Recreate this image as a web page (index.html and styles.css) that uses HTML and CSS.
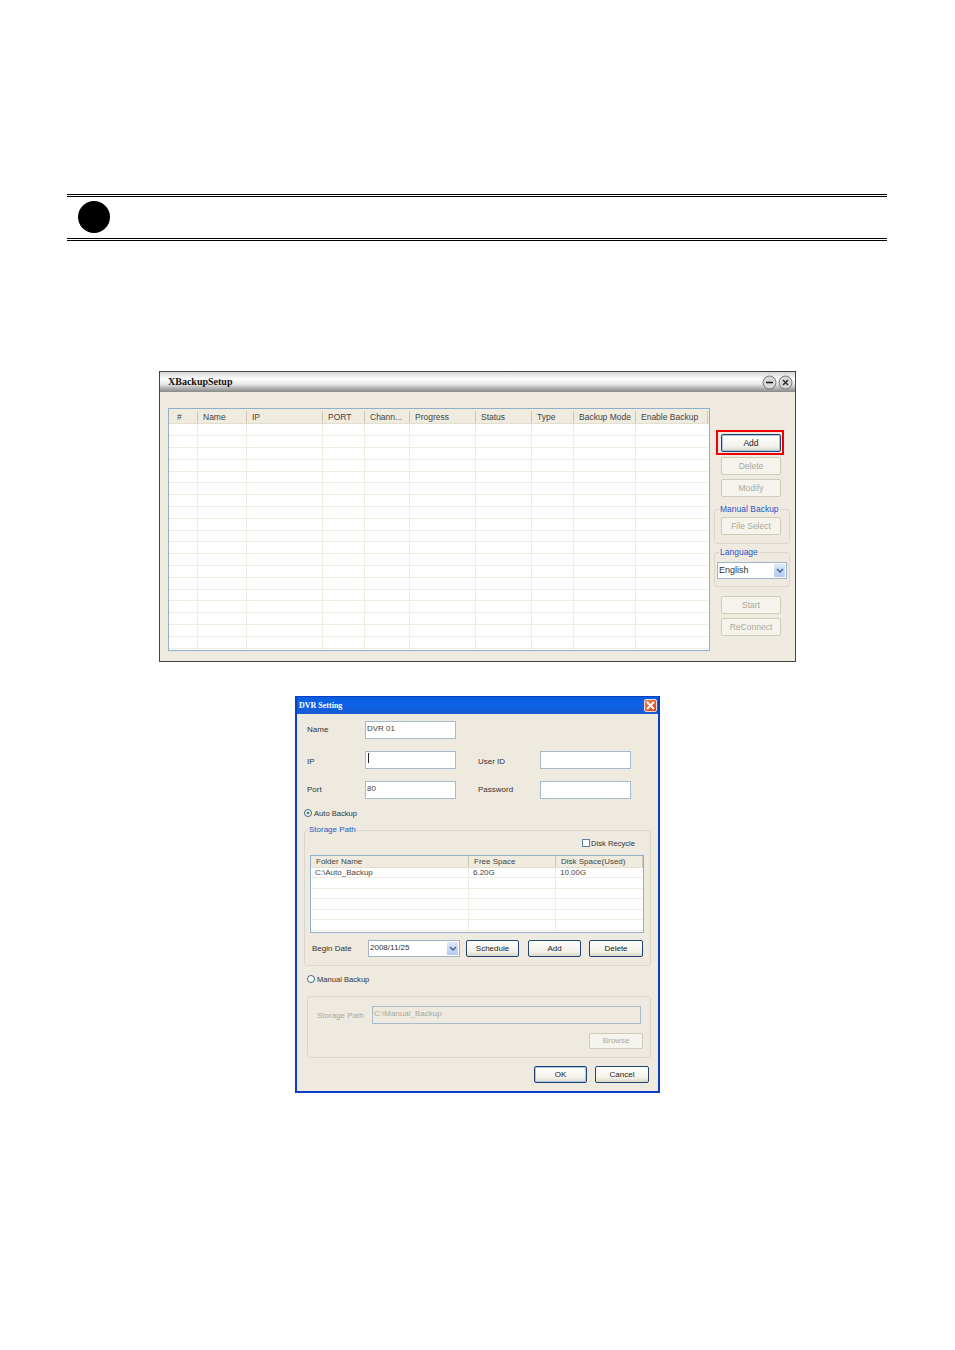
FILE: index.html
```html
<!DOCTYPE html>
<html lang="en">
<head>
    <meta charset="UTF-8">
    <title>XBackup Setup</title>
    <link rel="stylesheet" href="styles.css">
</head>
<body>
    <div class="note-bar">
        <div class="note-dot"></div>
    </div>

    <!-- XBackup main window -->
    <div class="xb-window">
        <div class="xb-title">
            <span class="xb-title-text">XBackupSetup</span>
            <div class="xb-title-icons">
                <svg width="15" height="15" viewBox="0 0 15 15"><circle cx="7.5" cy="7.5" r="6.5" fill="#d8d8d8" stroke="#777"/><path d="M4 7.5h7" stroke="#222" stroke-width="1.6"/></svg>
                <svg width="15" height="15" viewBox="0 0 15 15"><circle cx="7.5" cy="7.5" r="6.5" fill="#d8d8d8" stroke="#777"/><path d="M5 5l5 5M10 5l-5 5" stroke="#333" stroke-width="1.6"/></svg>
            </div>
        </div>
        <div class="xb-body">
            <div class="list xb-list">
                <div class="list-head">
                    <div class="col c1 hash">#</div>
                    <div class="col c2">Name</div>
                    <div class="col c3">IP</div>
                    <div class="col c4">PORT</div>
                    <div class="col c5">Chann...</div>
                    <div class="col c6">Progress</div>
                    <div class="col c7">Status</div>
                    <div class="col c8">Type</div>
                    <div class="col c9">Backup Mode</div>
                    <div class="col c10">Enable Backup</div>
                </div>
                <div class="list-rows">
                    <div class="cell c1"></div>
                    <div class="cell c2"></div>
                    <div class="cell c3"></div>
                    <div class="cell c4"></div>
                    <div class="cell c5"></div>
                    <div class="cell c6"></div>
                    <div class="cell c7"></div>
                    <div class="cell c8"></div>
                    <div class="cell c9"></div>
                    <div class="cell c10"></div>
                </div>
            </div>
            <div class="xb-side">
                <div class="add-wrap">
                    <div class="btn btn-focus">Add</div>
                    <div class="red-box"></div>
                </div>
                <div class="btn disabled">Delete</div>
                <div class="btn disabled">Modify</div>
                <fieldset class="group side-group manual-group">
                    <legend>Manual Backup</legend>
                    <div class="btn disabled">File Select</div>
                </fieldset>
                <fieldset class="group side-group lang-group">
                    <legend>Language</legend>
                    <div class="select lang-select">
                        <span class="select-text">English</span>
                        <div class="select-arrow">
                            <svg width="8" height="6" viewBox="0 0 8 6"><path d="M1 1l3 3 3-3" fill="none" stroke="#4d6185" stroke-width="1.5"/></svg>
                        </div>
                    </div>
                </fieldset>
                <div class="btn disabled start-btn">Start</div>
                <div class="btn disabled">ReConnect</div>
            </div>
        </div>
    </div>

    <!-- DVR Setting dialog -->
    <div class="dvr-window">
        <div class="dvr-title">
            <span class="dvr-title-text">DVR Setting</span>
            <div class="dvr-close">
                <svg width="9" height="9" viewBox="0 0 9 9"><path d="M1 1l7 7M8 1l-7 7" stroke="#fff" stroke-width="1.8"/></svg>
            </div>
        </div>
        <div class="dvr-body">
            <div class="form-grid">
                <div class="form-label">Name</div>
                <div class="input">DVR 01</div>
                <div></div>
                <div></div>
                <div class="form-label form-label-low">IP</div>
                <div class="input"><span class="caret"></span></div>
                <div class="form-label form-label-right form-label-low">User ID</div>
                <div class="input"></div>
                <div class="form-label">Port</div>
                <div class="input">80</div>
                <div class="form-label form-label-right">Password</div>
                <div class="input"></div>
            </div>

            <div class="radio-row auto-row">
                <span class="radio checked"></span>
                <span>Auto Backup</span>
            </div>

            <fieldset class="group storage-group">
                <legend>Storage Path</legend>
                <div class="recycle-row">
                    <span class="checkbox"></span>
                    <span>Disk Recycle</span>
                </div>
                <div class="list dvr-list">
                    <div class="list-head">
                        <div class="col d1">Folder Name</div>
                        <div class="col d2">Free Space</div>
                        <div class="col d3">Disk Space(Used)</div>
                    </div>
                    <div class="list-rows">
                        <div class="cell d1">C:\Auto_Backup</div>
                        <div class="cell d2">6.20G</div>
                        <div class="cell d3">10.00G</div>
                    </div>
                </div>
                <div class="date-row">
                    <div class="date-label">Begin Date</div>
                    <div class="select date-select">
                        <span class="select-text">2008/11/25</span>
                        <div class="select-arrow">
                            <svg width="8" height="6" viewBox="0 0 8 6"><path d="M1 1l3 3 3-3" fill="none" stroke="#4d6185" stroke-width="1.5"/></svg>
                        </div>
                    </div>
                    <div class="btn btn-small schedule-small">Schedule</div>
                    <div class="btn btn-small add-small">Add</div>
                    <div class="btn btn-small delete-small">Delete</div>
                </div>
            </fieldset>

            <div class="radio-row manual-row">
                <span class="radio"></span>
                <span>Manual Backup</span>
            </div>

            <div class="group manual-box">
                <div class="manual-path">
                    <div class="manual-label">Storage Path</div>
                    <div class="input manual-input">C:\Manual_Backup</div>
                </div>
                <div class="browse-row">
                    <div class="btn btn-small disabled">Browse</div>
                </div>
            </div>

            <div class="dialog-buttons">
                <div class="btn btn-small btn-focus">OK</div>
                <div class="btn btn-small cancel-btn">Cancel</div>
            </div>
        </div>
    </div>
</body>
</html>
```

FILE: styles.css
```css
* {
    box-sizing: border-box;
    margin: 0;
    padding: 0;
}

body {
    background-color: #fff;
    color: #333;
    font-family: "Liberation Sans", Arial, sans-serif;
    font-size: 8.5px;
    height: 1350px;
    overflow: hidden;
}

/* Note bar */
.note-bar {
    width: 820px;
    height: 47px;
    margin: 194px 0 0 67px;
    border-top: 3px double #000;
    border-bottom: 3px double #000;
    padding: 4px 0 0 11px;
}

.note-dot {
    width: 32px;
    height: 32px;
    border-radius: 50%;
    background-color: #000;
}

/* XBackup window */
.xb-window {
    width: 637px;
    height: 291px;
    margin: 130px 0 0 159px;
    border: 1px solid #444;
    background-color: #eeeae0;
}

.xb-title {
    height: 20px;
    display: flex;
    justify-content: space-between;
    align-items: center;
    padding: 0 2px 2px 8px;
    background: linear-gradient(to bottom, #d5d5d5 0, #fdfdfd 35%, #e8e8e8 60%, #a9a9a9 85%, #8a8a8a 100%);
}

.xb-title-text {
    font-family: "Liberation Serif", serif;
    font-size: 10px;
    font-weight: bold;
    color: #111;
}

.xb-title-icons {
    display: flex;
    gap: 1px;
    margin-bottom: -2px;
}

.xb-body {
    display: flex;
    padding: 16px 0 0 8px;
}

/* List views */
.list {
    border: 1px solid #8fb0c8;
    background-color: #fff;
    display: flex;
    flex-direction: column;
}

.list-head {
    display: flex;
    background-color: #efebdf;
    border-bottom: 1px solid #e2dfd0;
    padding-top: 1px;
}

.col {
    height: 12px;
    line-height: 12px;
    padding-left: 5px;
    border-right: 1px solid #c9c6b6;
    margin-top: 1px;
    white-space: nowrap;
    overflow: hidden;
    color: #444;
}

.hash {
    padding-left: 8px;
}

.list-rows {
    flex: 1;
    display: flex;
}

.cell {
    border-right: 1px solid #efeddf;
    white-space: nowrap;
}

.cell.c10,
.cell.d3 {
    border-right: none;
}

.xb-list {
    width: 542px;
    height: 243px;
}

.xb-list .list-head {
    height: 15px;
}

/* five rows of 12, 12, 12, 12, 11 px */
.xb-list .list-rows {
    background-image: linear-gradient(to bottom,
        transparent 11px, #efeddf 11px, #efeddf 12px,
        transparent 12px, transparent 23px, #efeddf 23px, #efeddf 24px,
        transparent 24px, transparent 35px, #efeddf 35px, #efeddf 36px,
        transparent 36px, transparent 47px, #efeddf 47px, #efeddf 48px,
        transparent 48px, transparent 58px, #efeddf 58px, #efeddf 59px);
    background-size: 100% 59px;
}

.c1 { width: 29px; }
.c2 { width: 49px; }
.c3 { width: 76px; }
.c4 { width: 42px; }
.c5 { width: 45px; }
.c6 { width: 66px; }
.c7 { width: 56px; }
.c8 { width: 42px; }
.c9 { width: 62px; }
.c10 { width: 72px; }

/* Buttons and controls */
.btn {
    width: 60px;
    height: 18px;
    line-height: 16px;
    text-align: center;
    border: 1px solid #22456f;
    border-radius: 2px;
    background: linear-gradient(to bottom, #fff, #f3f1e8 70%, #dcd8c8);
    color: #222;
}

.btn-focus {
    box-shadow: inset 0 0 0 1px #a8c4ea;
}

.btn.disabled {
    border-color: #cfccbc;
    background: #f5f4ec;
    color: #aaa89c;
}

.btn-small {
    width: 53px;
    height: 17px;
    line-height: 15px;
}

.xb-side {
    width: 76px;
    margin-left: 4px;
    padding: 26px 0 0 7px;
    display: flex;
    flex-direction: column;
    gap: 4px;
}

.add-wrap {
    position: relative;
    width: 60px;
    margin-bottom: 1px;
}

.red-box {
    position: absolute;
    top: -4px;
    bottom: -3px;
    left: -5px;
    right: -3px;
    border: 2px solid #ee0000;
}

.group {
    border: 1px solid #dcd8c8;
    border-radius: 3px;
}

.group legend {
    color: #2a55c8;
    padding: 0 1px;
    margin-left: 4px;
    line-height: 10px;
}

.side-group {
    width: 76px;
    margin-left: -7px;
}

.manual-group {
    height: 40px;
    margin-top: 3px;
    padding-top: 3px;
}

.manual-group .btn {
    margin-left: 6px;
}

.lang-group {
    height: 40px;
    margin-top: -1px;
    padding-top: 5px;
}

.lang-select {
    margin-left: 2px;
}

.select {
    display: flex;
    justify-content: space-between;
    align-items: stretch;
    background-color: #fff;
    border: 1px solid #9fb4cc;
    color: #333;
}

.select-text {
    padding-left: 1px;
    line-height: 14px;
}

.select-arrow {
    width: 11px;
    margin: 1px;
    display: flex;
    justify-content: center;
    align-items: center;
    background: linear-gradient(to bottom, #dfe8fb, #b3c8f2);
}

.lang-select {
    width: 70px;
    height: 17px;
    font-size: 9px;
}

.start-btn {
    margin-top: 5px;
}

/* DVR Setting dialog */
.dvr-window {
    width: 365px;
    height: 397px;
    margin: 34px 0 0 295px;
    border: 2px solid #0a3fc4;
    border-top-width: 1px;
    background-color: #eeeae0;
}

.dvr-title {
    height: 17px;
    display: flex;
    justify-content: space-between;
    align-items: center;
    padding: 0 1px 0 2px;
    background: linear-gradient(to bottom, #0a5fe0, #0d62e8 50%, #1a5ad0);
}

.dvr-title-text {
    font-family: "Liberation Serif", serif;
    font-size: 8px;
    font-weight: bold;
    color: #fff;
}

.dvr-close {
    width: 13px;
    height: 13px;
    border: 1px solid #f4d8c8;
    border-radius: 2px;
    background: linear-gradient(to bottom right, #ec8a60, #d04018);
    display: flex;
    justify-content: center;
    align-items: center;
}

.dvr-body {
    padding: 7px 0 0 7px;
    font-size: 8px;
}

.form-grid {
    display: grid;
    grid-template-columns: 58px 91px 84px 91px;
    row-gap: 12px;
    padding-left: 3px;
}

.form-label {
    line-height: 18px;
    color: #333;
}

.form-label-right {
    margin-left: 22px;
}

.form-label-low {
    height: 18px;
    line-height: 22px;
}

.input {
    height: 18px;
    line-height: 14px;
    padding-left: 1px;
    background-color: #fff;
    border: 1px solid #a6bccb;
    color: #444;
}

.caret {
    display: inline-block;
    width: 1px;
    height: 10px;
    margin-left: 1px;
    margin-top: 1px;
    background-color: #222;
}

.radio-row {
    display: flex;
    align-items: center;
    gap: 2px;
    height: 10px;
    font-size: 7.6px;
    color: #333;
}

.auto-row {
    margin-top: 9px;
}

.radio {
    width: 8px;
    height: 8px;
    border: 1px solid #3f6488;
    border-radius: 50%;
    background-color: #fff;
}

.radio.checked {
    background: radial-gradient(circle, #3f8f4f 0, #3f8f4f 30%, #fff 40%);
}

.storage-group {
    width: 347px;
    height: 141px;
    margin-top: 7px;
    padding-top: 3px;
}

.storage-group legend {
    margin-left: 3px;
}

.recycle-row {
    display: flex;
    justify-content: flex-end;
    align-items: center;
    gap: 1px;
    height: 10px;
    padding-right: 15px;
    font-size: 7.6px;
}

.checkbox {
    width: 8px;
    height: 8px;
    border: 1px solid #5f7f9f;
    background-color: #fff;
}

.dvr-list {
    width: 334px;
    height: 78px;
    margin: 7px 0 0 5px;
}

.dvr-list .list-head {
    height: 12px;
    padding-top: 0;
}

.dvr-list .col {
    height: 11px;
    line-height: 12px;
    margin-top: 0;
}

/* row lines alternate 10 and 11 px apart */
.dvr-list .list-rows {
    background-image: repeating-linear-gradient(to bottom,
        transparent 0, transparent 9px, #efeddf 9px, #efeddf 10px,
        transparent 10px, transparent 20px, #efeddf 20px, #efeddf 21px);
}

.dvr-list .cell {
    padding-left: 4px;
    line-height: 10px;
    color: #444;
}

.d1 { width: 158px; }
.d2 { width: 87px; }
.d3 { flex: 1; }

.date-row {
    display: flex;
    align-items: center;
    margin: 7px 0 0 7px;
}

.date-label {
    width: 56px;
}

.date-select {
    width: 92px;
    height: 17px;
}

.schedule-small {
    margin-left: 6px;
}

.add-small {
    margin-left: 9px;
}

.delete-small {
    margin-left: 8px;
    width: 54px;
}

.manual-row {
    margin: 8px 0 0 3px;
}

.manual-box {
    width: 344px;
    height: 62px;
    margin: 12px 0 0 3px;
    padding: 9px 9px 0;
}

.manual-path {
    display: flex;
    align-items: center;
}

.manual-label {
    width: 55px;
    color: #aaa89c;
}

.manual-input {
    width: 269px;
    background-color: #eeeae0;
    color: #aaa89c;
}

.browse-row {
    display: flex;
    justify-content: flex-end;
    margin: 9px -2px 0 0;
}

.browse-row .btn {
    width: 54px;
    height: 16px;
    line-height: 14px;
}

.dialog-buttons {
    display: flex;
    justify-content: flex-end;
    gap: 8px;
    margin-top: 8px;
    padding-right: 2px;
    width: 347px;
}

.cancel-btn {
    width: 54px;
}
```
